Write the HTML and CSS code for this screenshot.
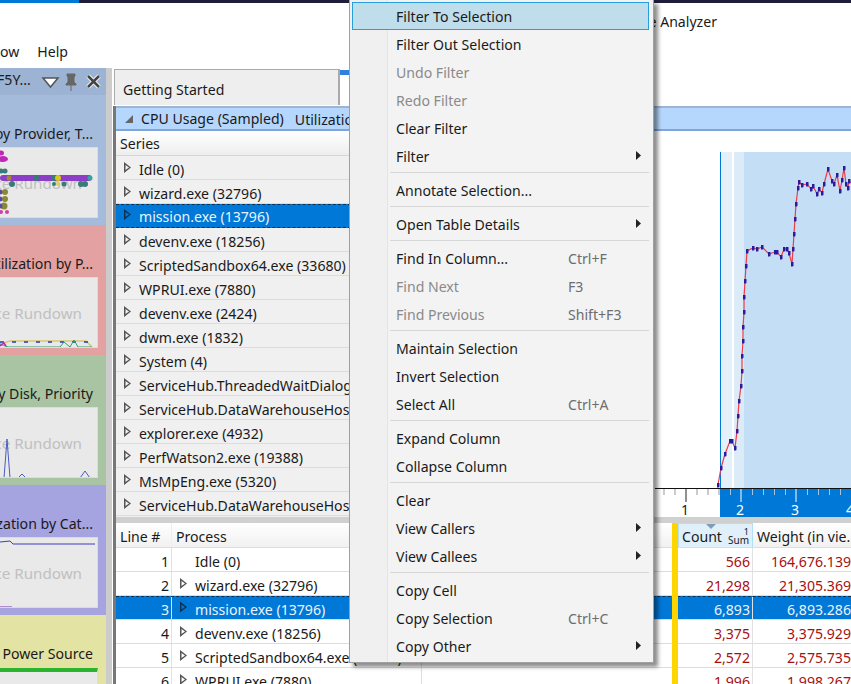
FILE: index.html
```html
<!DOCTYPE html>
<html lang="en">
<head>
  <meta charset="UTF-8" />
  <title>Windows Performance Analyzer</title>
  <link rel="stylesheet" href="styles.css">
</head>
<body>
  <div class="topbar"></div>
  <div class="titlebar">Windows Performance Analyzer</div>
  <div class="menubar"><span>ow</span><span>Help</span></div>

  <div class="workspace">
    <aside class="explorer">
      <div class="explorer-head">
        <span class="explorer-title">F5Y...</span>
        <svg class="explorer-icons" width="62" height="20" viewBox="0 0 62 20">
          <polygon points="2,6 17,6 9.5,15" fill="#fff" stroke="#555" stroke-width="1.5"/>
          <path d="M26 2h8v2l-1 1v5l2 2v1h-10v-1l2-2v-5l-1-1z M30 13v6" fill="#666" stroke="#666"/>
          <path d="M47 4l11 11M58 4l-11 11" stroke="#fff" stroke-width="4.5"/>
          <path d="M47 4l11 11M58 4l-11 11" stroke="#444" stroke-width="2.6"/>
        </svg>
      </div>

      <section class="thumb thumb-blue">
        <div class="thumb-label">Activity by Provider, T...</div>
        <div class="thumb-panel">
          <span>Trace Rundown</span>
          <svg class="thumb-plot" width="96" height="71" viewBox="0 0 96 71">
            <g fill="#c026b8"><ellipse cx="1" cy="5" rx="3" ry="2.5"/><ellipse cx="3" cy="11" rx="5" ry="3"/></g>
            <rect x="0" y="27" width="92" height="6" rx="3" fill="#8c3fc6"/>
            <g fill="#3a7a78">
              <circle cx="1" cy="23" r="2.5"/><circle cx="5" cy="23" r="2.5"/><circle cx="12" cy="36" r="3"/><circle cx="36" cy="30" r="3"/>
              <circle cx="54" cy="30" r="3"/><circle cx="54" cy="36" r="2"/><circle cx="64" cy="36" r="2.5"/>
              <circle cx="81" cy="36" r="3"/><circle cx="85" cy="36" r="3"/><circle cx="90" cy="30" r="2.5" fill="#2fa8a0"/>
            </g>
            <circle cx="58" cy="30" r="3" fill="#d8c818"/>
            <circle cx="58" cy="36" r="2" fill="#dcd060"/>
            <circle cx="9" cy="30" r="2.5" fill="#a08838"/>
            <g fill="#8a8a30"><circle cx="5" cy="44" r="3"/><circle cx="5" cy="51" r="3"/><circle cx="4" cy="58" r="3.5"/></g>
            <g fill="#5a4aa8"><circle cx="0" cy="44" r="2.5"/><circle cx="0" cy="51" r="2.5"/><circle cx="0" cy="58" r="2.5"/></g>
            <g fill="#d040a0"><circle cx="1" cy="64" r="2"/><circle cx="7" cy="64" r="2"/></g>
            <circle cx="7" cy="71" r="2" fill="#40a8b8"/>
          </svg>
        </div>
      </section>

      <section class="thumb thumb-red">
        <div class="thumb-label">Utilization by P...</div>
        <div class="thumb-panel">
          <span>Trace Rundown</span>
          <svg class="thumb-plot" width="96" height="71" viewBox="0 0 96 71">
            <polyline points="0,66 10,63 86,63 92,69" fill="none" stroke="#d8c870" stroke-width="1.5"/>
            <polyline points="0,64 20,64 90,64" fill="none" stroke="#2838b8" stroke-width="1.5" stroke-dasharray="4 8"/>
            <polyline points="0,66 8,69 30,69 60,69 64,64 70,69 74,62 78,69 92,69" fill="none" stroke="#28a070" stroke-width="1"/>
            <polyline points="0,68 4,65 6,68" fill="none" stroke="#c026b8" stroke-width="1.5"/>
          </svg>
        </div>
      </section>

      <section class="thumb thumb-green">
        <div class="thumb-label">IO by Disk, Priority</div>
        <div class="thumb-panel">
          <span>Trace Rundown</span>
          <svg class="thumb-plot" width="96" height="71" viewBox="0 0 96 71">
            <polyline points="0,70 4,70 7,31 10,70 18,70 22,66 26,70 34,70 40,70 54,70 62,70 80,70 85,63 90,70" fill="none" stroke="#4a5cc0" stroke-width="1"/>
          </svg>
        </div>
      </section>

      <section class="thumb thumb-purple">
        <div class="thumb-label">Utilization by Cat...</div>
        <div class="thumb-panel">
          <span>Trace Rundown</span>
          <svg class="thumb-plot" width="96" height="71" viewBox="0 0 96 71">
            <polyline points="0,4 10,3 13,6 95,6" fill="none" stroke="#3c3cc0" stroke-width="1"/>
            <line x1="0" y1="69" x2="12" y2="69" stroke="#7030b0" stroke-width="1"/>
          </svg>
        </div>
      </section>

      <section class="thumb thumb-yellow">
        <div class="thumb-label">Power Source</div>
        <div class="thumb-panel thumb-power"></div>
      </section>
    </aside>

    <div class="splitter"></div>

    <main class="content">
      <div class="tabs">
        <div class="tab">Getting Started</div>
        <div class="tab-active"></div>
      </div>

      <div class="analysis">
        <div class="graph-head">
          <svg width="10" height="10" viewBox="0 0 10 10"><polygon points="9,1 9,9 1,9" fill="#666"/></svg>
          <span class="graph-name">CPU Usage (Sampled)</span>
          <span class="graph-preset">Utilization by Process</span>
        </div>

        <div class="graph-body">
          <div class="series">
            <div class="series-head">Series</div>
            <div class="row"><i class="tri"></i>Idle (0)</div>
            <div class="row"><i class="tri"></i>wizard.exe (32796)</div>
            <div class="row selected"><i class="tri"></i>mission.exe (13796)</div>
            <div class="row"><i class="tri"></i>devenv.exe (18256)</div>
            <div class="row"><i class="tri"></i>ScriptedSandbox64.exe (33680)</div>
            <div class="row"><i class="tri"></i>WPRUI.exe (7880)</div>
            <div class="row"><i class="tri"></i>devenv.exe (2424)</div>
            <div class="row"><i class="tri"></i>dwm.exe (1832)</div>
            <div class="row"><i class="tri"></i>System (4)</div>
            <div class="row"><i class="tri"></i>ServiceHub.ThreadedWaitDialog</div>
            <div class="row"><i class="tri"></i>ServiceHub.DataWarehouseHost</div>
            <div class="row"><i class="tri"></i>explorer.exe (4932)</div>
            <div class="row"><i class="tri"></i>PerfWatson2.exe (19388)</div>
            <div class="row"><i class="tri"></i>MsMpEng.exe (5320)</div>
            <div class="row"><i class="tri"></i>ServiceHub.DataWarehouseHost</div>
          </div>

          <svg class="chart" width="196" height="386" viewBox="655 131 196 386">
            <defs>
              <marker id="dot" markerWidth="3" markerHeight="5" refX="1.5" refY="2.5" markerUnits="userSpaceOnUse">
                <rect width="3" height="5" rx="1" fill="#2a1a9c"/>
              </marker>
            </defs>
            <rect x="720" y="152" width="131" height="336" fill="#c4dff5"/>
            <rect x="720" y="152" width="12" height="336" fill="#e4f0fa"/>
            <rect x="732" y="152" width="2" height="336" fill="#fff"/>
            <rect x="734" y="152" width="10" height="336" fill="#dcebf8"/>
            <rect x="720" y="152" width="1" height="336" fill="#0078d7"/>
            <polyline fill="none" stroke="#ee3b4a" stroke-width="1.2" marker-start="url(#dot)" marker-mid="url(#dot)"
              points="718,485 721,468 725,454 730,441 732,441 735,448 737,431 738,416 739,401 741,386 742,371 742,356 743,341 743,327 744,312 744,297 745,281 746,266 747,251 753,248 757,249 762,247 769,254 775,252 777,252 781,257 784,249 787,249 789,253 792,264 793,249 794,234 795,219 796,204 798,188 799,182 802,185 807,184 811,189 813,186 817,194 819,189 822,193 824,184 828,169 832,181 834,184 837,175 840,191 842,180 844,168 846,184 848,188 849,181 851,183"/>
            <rect x="720" y="488" width="131" height="29" fill="#0078d7"/>
            <line x1="655" y1="488.5" x2="851" y2="488.5" stroke="#111"/>
            <path d="M664 489v6M675 489v6M697 489v6M708 489v6M719 489v6" stroke="#999"/>
            <path d="M686 489v13" stroke="#222"/>
            <path d="M730.5 489v6M752.5 489v6M763.5 489v6M774.5 489v6M785.5 489v6M807.5 489v6M818.5 489v6M829.5 489v6M840.5 489v6" stroke="#9cc8ee"/>
            <path d="M741 489v13M796 489v13" stroke="#fff"/>
            <g class="chart-label">
              <text x="685" y="515" fill="#222" text-anchor="middle">1</text>
              <text x="740" y="515" text-anchor="middle">2</text>
              <text x="795" y="515" text-anchor="middle">3</text>
              <text x="850" y="515" text-anchor="middle">4</text>
            </g>
          </svg>
        </div>

        <div class="pane-split"></div>

        <div class="table">
          <div class="tr thead">
            <div class="td c-line">Line #</div>
            <div class="td c-proc">Process</div>
            <div class="td c-blank"></div>
            <div class="c-key"></div>
            <div class="td c-count">
              Count
              <i class="sort"></i>
              <small class="rank">1</small>
              <small class="agg">Sum</small>
            </div>
            <div class="td c-weight">Weight (in vie...</div>
          </div>
          <div class="tr">
            <div class="td c-line num">1</div>
            <div class="td c-proc"><i class="tri tri-none"></i>Idle (0)</div>
            <div class="td c-blank"></div><div class="c-key"></div>
            <div class="td c-count num val">566</div><div class="td c-weight num val">164,676.139</div>
          </div>
          <div class="tr">
            <div class="td c-line num">2</div>
            <div class="td c-proc"><i class="tri"></i>wizard.exe (32796)</div>
            <div class="td c-blank"></div><div class="c-key"></div>
            <div class="td c-count num val">21,298</div><div class="td c-weight num val">21,305.369</div>
          </div>
          <div class="tr selected">
            <div class="td c-line num">3</div>
            <div class="td c-proc"><i class="tri"></i>mission.exe (13796)</div>
            <div class="td c-blank"></div><div class="c-key"></div>
            <div class="td c-count num">6,893</div><div class="td c-weight num">6,893.286</div>
          </div>
          <div class="tr">
            <div class="td c-line num">4</div>
            <div class="td c-proc"><i class="tri"></i>devenv.exe (18256)</div>
            <div class="td c-blank"></div><div class="c-key"></div>
            <div class="td c-count num val">3,375</div><div class="td c-weight num val">3,375.929</div>
          </div>
          <div class="tr">
            <div class="td c-line num">5</div>
            <div class="td c-proc"><i class="tri"></i>ScriptedSandbox64.exe (33680)</div>
            <div class="td c-blank"></div><div class="c-key"></div>
            <div class="td c-count num val">2,572</div><div class="td c-weight num val">2,575.735</div>
          </div>
          <div class="tr">
            <div class="td c-line num">6</div>
            <div class="td c-proc"><i class="tri"></i>WPRUI.exe (7880)</div>
            <div class="td c-blank"></div><div class="c-key"></div>
            <div class="td c-count num val">1,996</div><div class="td c-weight num val">1,998.267</div>
          </div>
        </div>
      </div>
    </main>
  </div>

  <div class="menu">
    <div class="item hot">Filter To Selection</div>
    <div class="item">Filter Out Selection</div>
    <div class="item off">Undo Filter</div>
    <div class="item off">Redo Filter</div>
    <div class="item">Clear Filter</div>
    <div class="item sub">Filter</div>
    <div class="sep"></div>
    <div class="item">Annotate Selection...</div>
    <div class="sep"></div>
    <div class="item sub">Open Table Details</div>
    <div class="sep"></div>
    <div class="item">Find In Column...<span class="key">Ctrl+F</span></div>
    <div class="item off">Find Next<span class="key">F3</span></div>
    <div class="item off">Find Previous<span class="key">Shift+F3</span></div>
    <div class="sep"></div>
    <div class="item">Maintain Selection</div>
    <div class="item">Invert Selection</div>
    <div class="item">Select All<span class="key">Ctrl+A</span></div>
    <div class="sep"></div>
    <div class="item">Expand Column</div>
    <div class="item">Collapse Column</div>
    <div class="sep"></div>
    <div class="item">Clear</div>
    <div class="item sub">View Callers</div>
    <div class="item sub">View Callees</div>
    <div class="sep"></div>
    <div class="item">Copy Cell</div>
    <div class="item">Copy Selection<span class="key">Ctrl+C</span></div>
    <div class="item sub">Copy Other</div>
  </div>
</body>
</html>
```

FILE: styles.css
```css
* {
  box-sizing: border-box;
}

body {
  margin: 0;
  width: 851px;
  height: 684px;
  overflow: hidden;
  position: relative;
  background-color: #ffffff;
  color: #1a1a1a;
  font-family: "Noto Sans", sans-serif;
  font-size: 14.1px;
}

.topbar {
  height: 3px;
  background: linear-gradient(to right, #0078d7 79px, #1e1e38 79px);
}

.titlebar {
  height: 32px;
  display: flex;
  justify-content: flex-end;
  align-items: center;
  padding: 4px 134px 0 0;
  white-space: nowrap;
}

.menubar {
  height: 33px;
  display: flex;
  align-items: center;
  gap: 18px;
}

/* left rail */
.workspace {
  display: flex;
  height: 616px;
}

.explorer {
  width: 106px;
  flex: none;
  overflow: hidden;
}

.explorer-head {
  height: 27px;
  background-color: #9cb3d3;
  display: flex;
  align-items: center;
  justify-content: flex-end;
  position: relative;
}

.explorer-title {
  position: absolute;
  left: -3px;
  top: 2px;
}

.explorer-icons {
  margin-right: 3px;
}

.thumb {
  height: 130px;
  padding: 28px 8px 8px 0;
}

.thumb-blue { background-color: #a5bbdb; }
.thumb-red { background-color: #e3a1a1; }
.thumb-green { background-color: #a8c4a2; }
.thumb-purple { background-color: #a5a3e0; }
.thumb-yellow { background-color: #e3e3a3; }

.thumb-label {
  height: 24px;
  display: flex;
  justify-content: flex-end;
  align-items: center;
  padding: 0 5px 4px 0;
  white-space: nowrap;
}

.thumb-panel {
  height: 71px;
  position: relative;
  overflow: hidden;
  display: flex;
  justify-content: flex-end;
  align-items: center;
  padding-right: 15px;
  white-space: nowrap;
  background-color: #e9e9e9;
  border: 1px solid #dcdcdc;
  border-left: none;
  color: #c0c0c0;
  font-size: 15.2px;
}

.thumb-plot {
  position: absolute;
  left: 0;
  top: 0;
}

.thumb-power {
  border-top: 4px solid #2bb52f;
  margin-top: 1px;
}

.splitter {
  width: 6px;
  flex: none;
  background-color: #cccccc;
}

/* main area */
.content {
  flex: 1;
  min-width: 0;
  padding-left: 2px;
}

.tabs {
  display: flex;
  height: 38px;
  padding: 1px 0;
}

.tab {
  width: 226px;
  background-color: #eeeeee;
  border: 1px solid #aaaaaa;
  border-bottom: none;
  border-right: 2px solid #aaaaaa;
  padding: 10px 0 0 8px;
}

.tab-active {
  width: 12px;
  height: 5px;
  margin-top: 1px;
  background-color: #3080e0;
}

.analysis {
  border-left: 3px solid #777777;
  margin-left: -1px;
  height: 578px;
  overflow: hidden;
}

.graph-head {
  height: 25px;
  display: flex;
  align-items: center;
  padding-left: 8px;
  white-space: nowrap;
  overflow: hidden;
  background-color: #b6d7fd;
  border-top: 2px solid #9fb4d0;
  border-bottom: 2px solid #7fa5d9;
}

.graph-name {
  margin-left: 7px;
}

.graph-preset {
  margin-left: 11px;
  padding-top: 2px;
}

.graph-body {
  display: flex;
  justify-content: space-between;
  height: 386px;
}

.series {
  width: 240px;
  flex: none;
  background-color: #f0f0f0;
}

.series-head {
  height: 25px;
  line-height: 25px;
  padding-left: 4px;
  background: linear-gradient(#ffffff, #eeeeee);
  border-bottom: 1px solid #d6d6d6;
}

.row {
  height: 24px;
  display: flex;
  align-items: center;
  padding: 4px 0 0 8px;
  white-space: nowrap;
  overflow: hidden;
  border-bottom: 1px solid #dcdcdc;
}

.selected {
  background-color: #0078d7;
  color: #eaf4fc;
  border-top: 1px dashed #10304f;
  border-bottom: 1px dashed #10304f;
}

.row.selected {
  padding-top: 1px;
}

.tri {
  display: block;
  flex: none;
  width: 7px;
  height: 11px;
  margin: -4px 8px 0 0;
  background-color: #555555;
  clip-path: polygon(0 0, 100% 50%, 0 100%, 0 0, 1.5px 3px, 1.5px calc(100% - 3px), calc(100% - 2px) 50%, 1.5px 3px);
}

.selected .tri {
  background-color: #10304f;
}

.tri-none {
  background-color: transparent;
}

.chart {
  display: block;
  flex: none;
}

.chart-label {
  fill: #ffffff;
  font-size: 14px;
}

.pane-split {
  height: 6px;
  background-color: #d0d0d0;
}

/* table */
.tr {
  display: flex;
  height: 24px;
  border-bottom: 1px solid #dddddd;
  white-space: nowrap;
}

.thead {
  height: 25px;
  background: linear-gradient(#ffffff, #f1f1f1);
}

.td {
  height: 100%;
  display: flex;
  align-items: center;
  padding-top: 4px;
  overflow: hidden;
  flex: none;
}

.selected .td {
  padding-top: 2px;
}

.c-line {
  width: 56px;
  padding-left: 4px;
  border-right: 1px solid #e2e2e2;
}

.c-proc {
  width: 250px;
  padding-left: 8px;
  border-right: 1px solid #dddddd;
}

.thead .td {
  padding-top: 2px;
}

.thead .c-proc {
  padding-left: 4px;
}

.c-blank {
  width: 250px;
}

.c-key {
  width: 6px;
  flex: none;
  height: calc(100% + 1px);
  background-color: #ffd500;
}

.selected .c-key {
  height: calc(100% + 2px);
  margin-top: -1px;
}

.c-count {
  width: 75px;
  padding-left: 3px;
  position: relative;
  border-right: 1px solid #e2e2e2;
}

.c-weight {
  width: 98px;
  padding-left: 4px;
}

.thead .c-line,
.thead .c-proc {
  border-right: 1px solid #eeeeee;
}

.thead .c-count {
  background-color: #dff0fb;
  border: 1px solid #aee0f8;
  border-bottom: none;
}

.sort {
  position: absolute;
  left: 27px;
  top: 0;
  width: 10px;
  height: 5px;
  background-color: #7f9db8;
  clip-path: polygon(0 0, 100% 0, 50% 100%);
}

.rank,
.agg {
  position: absolute;
  right: 3px;
  line-height: 9px;
}

.rank {
  top: 3px;
  font-size: 9px;
}

.agg {
  bottom: 2px;
  font-size: 10px;
}

.num {
  justify-content: flex-end;
  padding-right: 2px;
}

.c-weight.num {
  padding-right: 0;
}

.val {
  color: #a80f0f;
}

/* context menu */
.menu {
  position: absolute;
  left: 349px;
  top: 0;
  width: 305px;
  height: 663px;
  padding: 2px 4px 3px 2px;
  background: linear-gradient(to right, #f0f0f0 37px, #e4e4e4 37px, #e4e4e4 38px, #f3f3f3 38px);
  border: 1px solid #a0a0a0;
  border-top: none;
  box-shadow: 4px 4px 4px rgba(0, 0, 0, 0.45);
}

.item {
  height: 28px;
  display: flex;
  align-items: center;
  padding-left: 44px;
  position: relative;
  white-space: nowrap;
}

.hot {
  background-color: #c0ddec;
  border: 1px solid #26a0da;
  padding-left: 43px;
}

.off {
  color: #8a8a8a;
}

.key {
  position: absolute;
  left: 216px;
  color: #6d6d6d;
}

.sub::after {
  content: "";
  position: absolute;
  right: 8px;
  top: 9px;
  width: 5px;
  height: 9px;
  background-color: #222222;
  clip-path: polygon(0 0, 100% 50%, 0 100%);
}

.sep {
  height: 1px;
  margin: 2px 0 3px 38px;
  background-color: #d7d7d7;
}
```
